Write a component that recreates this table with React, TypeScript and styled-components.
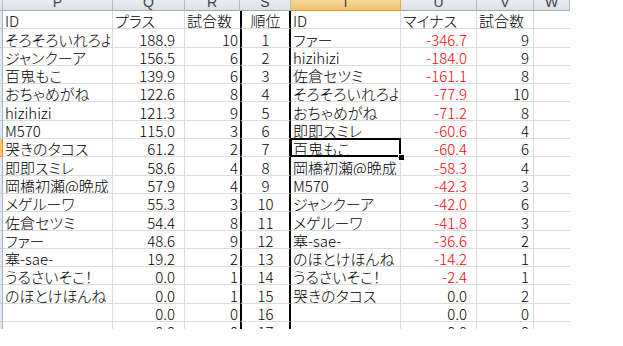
import React from 'react';
import styled, { createGlobalStyle, css } from 'styled-components';

const GlobalStyle = createGlobalStyle`
  html, body { margin: 0; padding: 0; background: #ffffff; }
  body { font-family: "Noto Sans CJK JP", "Noto Sans", sans-serif; }
`;

const COLUMNS = '3px 110px 72px 55px 51px 110px 76px 57px 36px';
const GRID = '#dadcdd';

const Sheet = styled.div`
  width: 570px;
  height: 329px;
  overflow: hidden;
  display: flex;
  flex-direction: column;
  background: #ffffff;
`;

const HeaderRow = styled.div`
  display: grid;
  grid-template-columns: ${COLUMNS};
  height: 11px;
  flex: none;
`;

const ColHead = styled.div<{ $selected?: boolean }>`
  box-sizing: border-box;
  height: 11px;
  min-width: 0;
  display: flex;
  align-items: flex-end;
  justify-content: center;
  padding-bottom: 3px;
  overflow: hidden;
  font-family: "Liberation Sans", Arial, sans-serif;
  font-size: 14px;
  line-height: 10px;
  color: #3c4450;
  background: linear-gradient(#e9ecf0, #dde1e6);
  border-right: 1px solid #b3bac4;
  border-bottom: 1px solid #9eabb9;
  ${(p) =>
    p.$selected &&
    css`
      background: linear-gradient(#f9d99f, #f3c369);
      border-right-color: #e6a445;
      border-bottom-color: #f29436;
    `}
`;

const Row = styled.div`
  display: grid;
  grid-template-columns: ${COLUMNS};
  height: 18.3px;
  flex: none;
`;

const RowHead = styled.div<{ $selected?: boolean }>`
  box-sizing: border-box;
  background: ${(p) => (p.$selected ? '#f6c86c' : '#e4e8ee')};
  border-right: 1px solid ${(p) => (p.$selected ? '#f29436' : '#9eb6ce')};
  border-bottom: 1px solid ${(p) => (p.$selected ? '#f29436' : '#c5ccd6')};
`;

type Align = 'left' | 'right' | 'center';

const Cell = styled.div<{
  $align?: Align;
  $padR?: number;
  $red?: boolean;
  $rank?: boolean;
  $noRight?: boolean;
  $active?: boolean;
}>`
  position: relative;
  box-sizing: border-box;
  min-width: 0;
  display: flex;
  align-items: flex-end;
  justify-content: ${(p) =>
    p.$align === 'right' ? 'flex-end' : p.$align === 'center' ? 'center' : 'flex-start'};
  padding: 0 ${(p) => p.$padR ?? 2}px 0 2px;
  border-bottom: 1px solid ${GRID};
  border-right: ${(p) => (p.$noRight ? 'none' : `1px solid ${GRID}`)};
  color: ${(p) => (p.$red ? '#ff0000' : '#000000')};
  font-size: 15px;
  font-weight: 300;
  line-height: 15px;
  font-feature-settings: "palt";
  white-space: nowrap;
  ${(p) =>
    p.$rank &&
    css`
      border-left: 2px solid #000000;
      border-right: 2px solid #000000;
    `}
  ${(p) =>
    p.$active &&
    css`
      &::after {
        content: '';
        position: absolute;
        top: -1px;
        left: -1px;
        right: -1px;
        bottom: -1px;
        border: 2px solid #000000;
        z-index: 2;
      }
      &::before {
        content: '';
        position: absolute;
        right: -4px;
        bottom: -4px;
        width: 5px;
        height: 5px;
        background: #000000;
        outline: 1px solid #ffffff;
        z-index: 3;
      }
    `}
`;

const CellText = styled.span`
  min-width: 0;
  height: 15px;
  overflow: hidden;
  white-space: nowrap;
`;

const LETTERS = ['P', 'Q', 'R', 'S', 'T', 'U', 'V', 'W'];

const plus: [string, string, string][] = [
  ['そろそろいれろよ', '188.9', '10'],
  ['ジャンクーア', '156.5', '6'],
  ['百鬼もこ', '139.9', '6'],
  ['おちゃめがね', '122.6', '8'],
  ['hizihizi', '121.3', '9'],
  ['M570', '115.0', '3'],
  ['哭きのタコス', '61.2', '2'],
  ['即即スミレ', '58.6', '4'],
  ['岡橋初瀬@晩成', '57.9', '4'],
  ['メゲルーワ', '55.3', '3'],
  ['佐倉セツミ', '54.4', '8'],
  ['ファー', '48.6', '9'],
  ['塞-sae-', '19.2', '2'],
  ['うるさいそこ！', '0.0', '1'],
  ['のほとけほんね', '0.0', '1'],
  ['', '0.0', '0'],
  ['', '0.0', '0'],
];

const minus: [string, string, string][] = [
  ['ファー', '-346.7', '9'],
  ['hizihizi', '-184.0', '9'],
  ['佐倉セツミ', '-161.1', '8'],
  ['そろそろいれろよ', '-77.9', '10'],
  ['おちゃめがね', '-71.2', '8'],
  ['即即スミレ', '-60.6', '4'],
  ['百鬼もこ', '-60.4', '6'],
  ['岡橋初瀬@晩成', '-58.3', '4'],
  ['M570', '-42.3', '3'],
  ['ジャンクーア', '-42.0', '6'],
  ['メゲルーワ', '-41.8', '3'],
  ['塞-sae-', '-36.6', '2'],
  ['のほとけほんね', '-14.2', '1'],
  ['うるさいそこ！', '-2.4', '1'],
  ['哭きのタコス', '0.0', '2'],
  ['', '0.0', '0'],
  ['', '0.0', '0'],
];

const SELECTED_ROW = 6;

export default function App() {
  return (
    <>
      <GlobalStyle />
      <Sheet>
        <HeaderRow>
          <ColHead />
          {LETTERS.map((l) => (
            <ColHead key={l} $selected={l === 'T'}>
              {l}
            </ColHead>
          ))}
        </HeaderRow>
        <Row>
          <RowHead />
          <Cell><CellText>ID</CellText></Cell>
          <Cell><CellText>プラス</CellText></Cell>
          <Cell $noRight><CellText>試合数</CellText></Cell>
          <Cell $rank $align="center"><CellText>順位</CellText></Cell>
          <Cell><CellText>ID</CellText></Cell>
          <Cell><CellText>マイナス</CellText></Cell>
          <Cell><CellText>試合数</CellText></Cell>
          <Cell $noRight />
        </Row>
        {plus.map((p, i) => {
          const m = minus[i];
          const sel = i === SELECTED_ROW;
          return (
            <Row key={i}>
              <RowHead $selected={sel} />
              <Cell><CellText>{p[0]}</CellText></Cell>
              <Cell $align="right" $padR={9}><CellText>{p[1]}</CellText></Cell>
              <Cell $align="right" $padR={2} $noRight><CellText>{p[2]}</CellText></Cell>
              <Cell $rank $align="center"><CellText>{i + 1}</CellText></Cell>
              <Cell $active={sel}><CellText>{m[0]}</CellText></Cell>
              <Cell $align="right" $padR={9} $red={m[1].startsWith('-')}>
                <CellText>{m[1]}</CellText>
              </Cell>
              <Cell $align="right" $padR={4}><CellText>{m[2]}</CellText></Cell>
              <Cell $noRight />
            </Row>
          );
        })}
      </Sheet>
    </>
  );
}
